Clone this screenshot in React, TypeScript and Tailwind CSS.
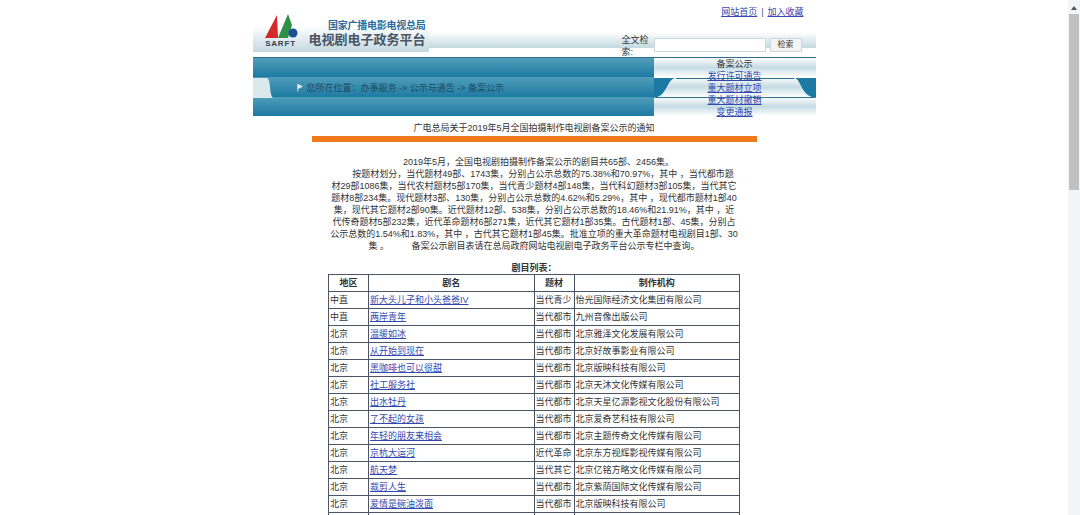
const navLinks = ["发行许可通告", "重大题材立项", "重大题材撤销", "变更通报"]

const bodyLines = [
  "　2019年5月，全国电视剧拍摄制作备案公示的剧目共65部、2456集。",
  "　　按题材划分，当代题材49部、1743集，分别占公示总数的75.38%和70.97%，其中 ，当代都市题",
  "材29部1086集，当代农村题材5部170集，当代青少题材4部148集，当代科幻题材3部105集，当代其它",
  "题材8部234集。现代题材3部、130集，分别占公示总数的4.62%和5.29%，其中 ，现代都市题材1部40",
  "集，现代其它题材2部90集。近代题材12部、538集，分别占公示总数的18.46%和21.91%，其中 ，近",
  "代传奇题材5部232集，近代革命题材6部271集，近代其它题材1部35集。古代题材1部、45集，分别占",
  "公示总数的1.54%和1.83%，其中 ，古代其它题材1部45集。批准立项的重大革命题材电视剧目1部、30",
  "集 。　　　备案公示剧目表请在总局政府网站电视剧电子政务平台公示专栏中查询。",
]

const rows = [
  ["中直", "新大头儿子和小头爸爸IV", "当代青少", "怡光国际经济文化集团有限公司"],
  ["中直", "两岸青年", "当代都市", "九州音像出版公司"],
  ["北京", "温暖如冰", "当代都市", "北京雅泽文化发展有限公司"],
  ["北京", "从开始到现在", "当代都市", "北京好故事影业有限公司"],
  ["北京", "黑咖啡也可以很甜", "当代都市", "北京版映科技有限公司"],
  ["北京", "社工服务社", "当代都市", "北京天沐文化传媒有限公司"],
  ["北京", "出水牡丹", "当代都市", "北京天星亿源影视文化股份有限公司"],
  ["北京", "了不起的女孩", "当代都市", "北京爱奇艺科技有限公司"],
  ["北京", "年轻的朋友来相会", "当代都市", "北京主题传奇文化传媒有限公司"],
  ["北京", "京杭大运河", "近代革命", "北京东方视辉影视传媒有限公司"],
  ["北京", "航天梦", "当代其它", "北京亿铭方略文化传媒有限公司"],
  ["北京", "裁剪人生", "当代都市", "北京紫荫国际文化传媒有限公司"],
  ["北京", "爱情是碗油泼面", "当代都市", "北京版映科技有限公司"],
  ["北京", "小楼又东风", "当代都市", "北京世纪伙伴文化传媒有限公司"],
]

function Logo() {
  return (
    <div className="flex flex-col items-center">
      <svg viewBox="0 0 36 24" className="h-6 w-9">
        <path d="M2 24 14 1l1 23z" fill="#d42a2a" />
        <path d="M15 24 25 0l4 11-4 13z" fill="#2f8f45" />
        <circle cx="30" cy="19" r="4.5" fill="#1d4f96" />
      </svg>
      <span className="text-[8px] leading-3 font-bold tracking-widest text-gray-700">SARFT</span>
    </div>
  )
}

function Header() {
  return (
    <div className="flex h-14">
      <div className="flex h-13 w-44 gap-2.5 bg-gradient-to-b from-white from-50% to-[#c3d9e0] pt-3.5 pl-2.5">
        <Logo />
        <div className="flex flex-col items-end pt-1.5">
          <span className="text-[10px] leading-3 font-bold tracking-tight text-[#2c6c9c]">国家广播电影电视总局</span>
          <span className="text-[13px] leading-4 font-bold text-gray-600">电视剧电子政务平台</span>
        </div>
      </div>
      <div className="flex flex-1 flex-col">
        <div className="flex h-8 justify-end gap-1 pt-1.5 pr-3 text-[9px] leading-3 text-gray-600">
          <a className="text-[#3448b0] underline">网站首页</a>
          <span>|</span>
          <a className="text-[#3448b0] underline">加入收藏</a>
        </div>
        <div className="flex h-4 justify-end gap-1 bg-gradient-to-b from-white to-[#c3d9e0] pt-1.5 pr-3.5">
          <span className="-mt-1 w-7 text-[9px] leading-3 text-[#333]">全文检索:</span>
          <input className="h-3.5 w-28 border border-gray-300 bg-white" />
          <button className="h-3.5 w-8 border border-gray-300 bg-gray-100 text-[8px] leading-3 text-[#333]">检索</button>
        </div>
      </div>
    </div>
  )
}

function Stripes({ light }: { light?: boolean }) {
  const cls = light
    ? "flex-1 bg-gradient-to-b from-white via-[#c5dce3] to-white"
    : "flex-1 bg-gradient-to-b from-[#4f9db9] to-[#1b7aa3]"
  return (
    <div className="absolute inset-0 flex flex-col">
      <div className={cls} />
      <div className={cls} />
      <div className={cls} />
    </div>
  )
}

function Band() {
  return (
    <div className="mt-px flex h-[59px] border-t border-[#2c7088]">
      <div className="relative flex flex-1 items-center pl-11">
        <Stripes />
        <svg viewBox="0 0 20 20" className="absolute top-5 left-0 h-5 w-5">
          <path d="M0 0h14c4 1 2 16 6 20H0z" fill="#dce9ec" />
        </svg>
        <div className="relative flex items-center gap-1 pt-0.5 text-[9px] leading-3 text-[#1c4a60]">
          <svg viewBox="0 0 8 12" className="h-3 w-1.5">
            <path d="M1 1v10M1 1l6 3-6 3" fill="#e8eef0" stroke="#e8eef0" />
          </svg>
          您所在位置：办事服务 -&gt; 公示与通告 -&gt; 备案公示
        </div>
      </div>
      <div className="relative w-[162px] text-center text-[9px] leading-3 text-[#333]">
        <Stripes light />
        <svg viewBox="0 0 162 20" className="absolute top-5 left-0 h-5 w-full" preserveAspectRatio="none">
          <path d="M0 0h22C12 1 14 18 0 20z" fill="#1b7aa3" />
          <path d="M162 0h-22c8 1 6 18 22 20z" fill="#1b7aa3" />
          <path d="M22 0.5h118" stroke="#2c7088" fill="none" />
          <path d="M2 19.5h158" stroke="#2c7088" fill="none" />
        </svg>
        <div className="relative">
          <div>备案公示</div>
          {navLinks.map((l) => (
            <a key={l} className="block text-[#3448b0] underline">{l}</a>
          ))}
        </div>
      </div>
    </div>
  )
}

function ListTable() {
  return (
    <table className="w-[412px] table-fixed border-collapse border border-gray-600 text-[9px] leading-3 text-[#333]">
      <thead>
        <tr>
          <th className="w-10 border border-gray-600 py-0.5 font-bold">地区</th>
          <th className="border border-gray-600 py-0.5 font-bold">剧名</th>
          <th className="w-10 border border-gray-600 py-0.5 font-bold">题材</th>
          <th className="border border-gray-600 py-0.5 font-bold">制作机构</th>
        </tr>
      </thead>
      <tbody>
        {rows.map((r) => (
          <tr key={r[1]}>
            <td className="border border-gray-600 px-px py-0.5">{r[0]}</td>
            <td className="border border-gray-600 px-px py-0.5">
              <a className="text-[#3448b0] underline">{r[1]}</a>
            </td>
            <td className="border border-gray-600 px-px py-0.5 whitespace-nowrap">{r[2]}</td>
            <td className="border border-gray-600 px-px py-0.5">{r[3]}</td>
          </tr>
        ))}
      </tbody>
    </table>
  )
}

export default function App() {
  return (
    <div
      className="flex h-[515px] overflow-hidden bg-white"
      style={{ fontFamily: '"Liberation Sans", "Noto Sans CJK SC", sans-serif' }}
    >
      <main className="flex flex-1 justify-center">
        <div className="w-[563px]">
          <Header />
          <Band />
          <div className="flex flex-col items-center pt-1.5 text-[9px] leading-3 text-[#333]">
            <div>广电总局关于2019年5月全国拍摄制作电视剧备案公示的通知</div>
            <div className="mt-0.5 h-1.5 w-[445px] bg-[#f07a1a]" />
            <div className="mt-3.5 w-[430px] text-center whitespace-pre">
              {bodyLines.map((l) => (
                <div key={l}>{l}</div>
              ))}
            </div>
            <div className="mt-2.5 font-bold">剧目列表：</div>
            <ListTable />
          </div>
        </div>
      </main>
      <aside className="flex w-3 flex-col items-center bg-gray-100">
        <svg viewBox="0 0 8 8" className="mt-1 h-2 w-2">
          <path d="M4 2 7 6H1z" fill="#555" />
        </svg>
        <div className="mt-0.5 h-44 w-2.5 bg-[#c1c1c1]" />
      </aside>
    </div>
  )
}
